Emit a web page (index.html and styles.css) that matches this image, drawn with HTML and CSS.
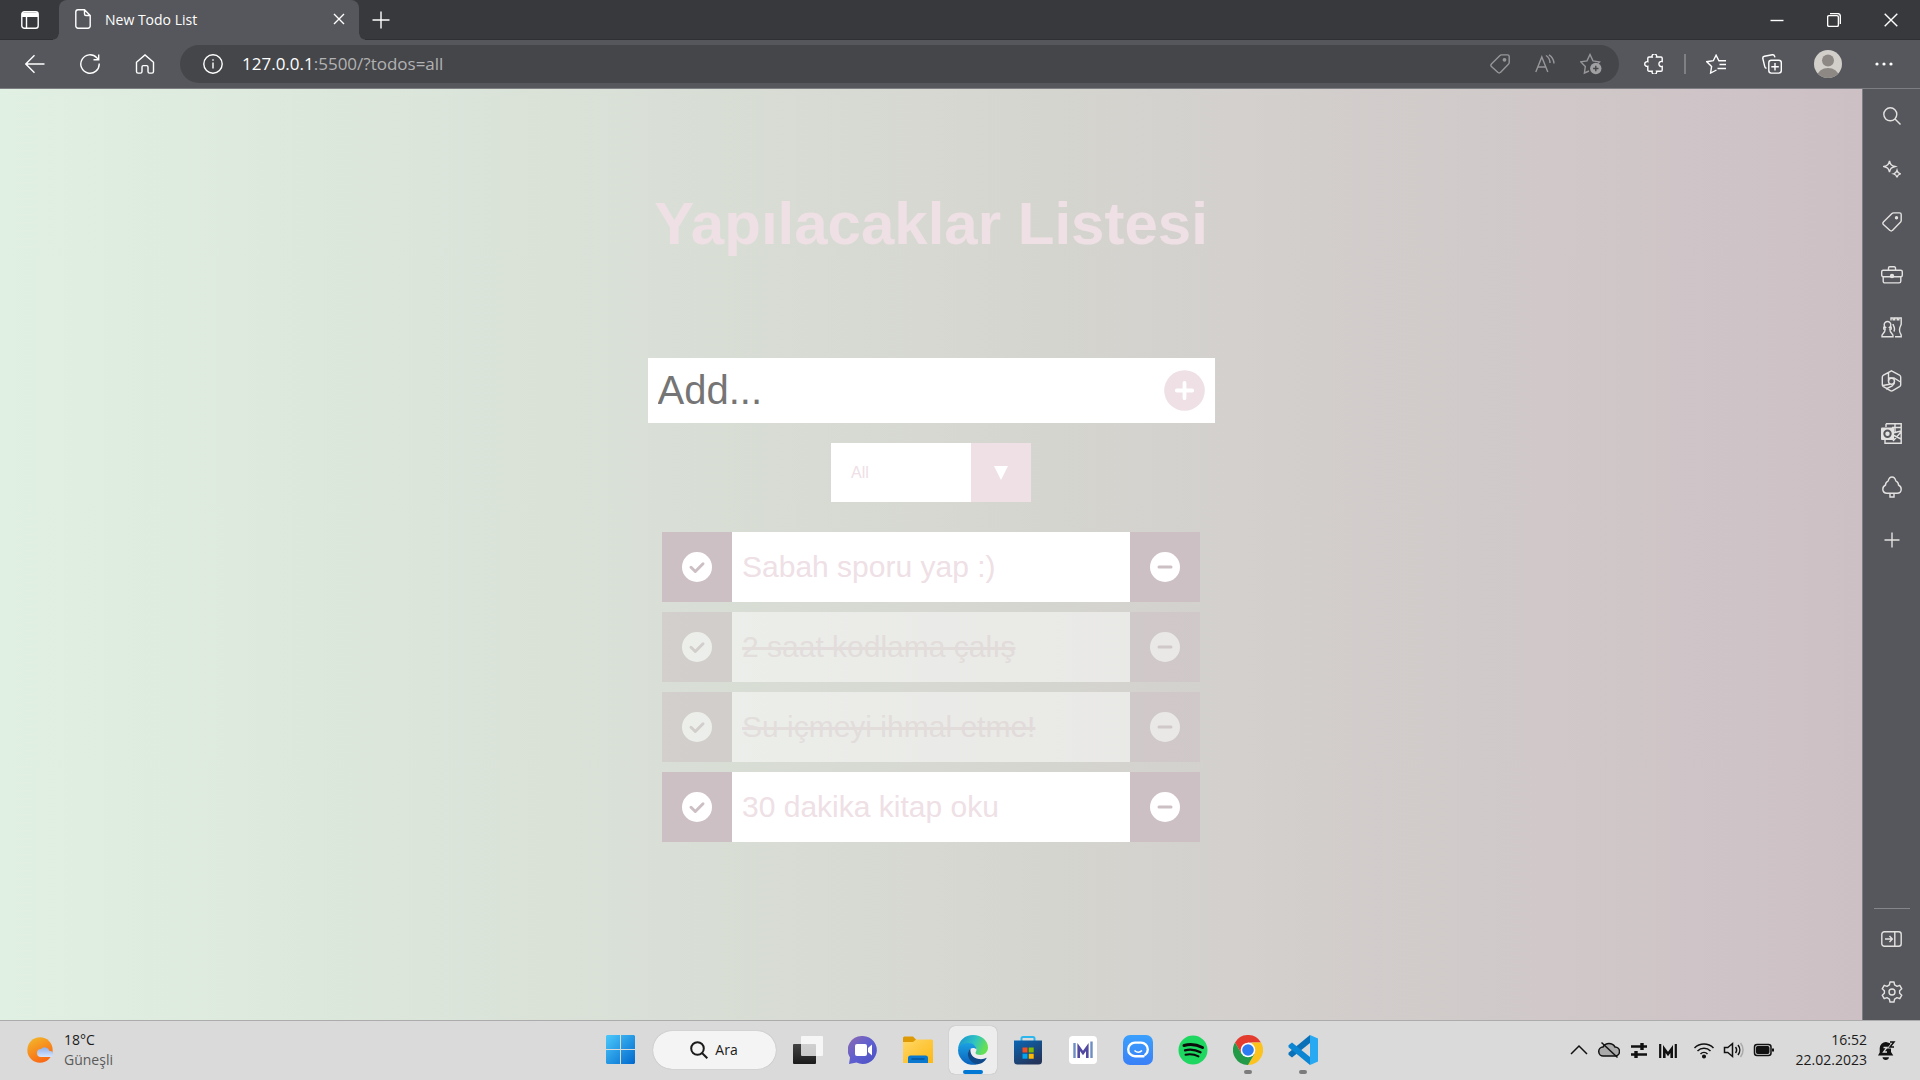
FILE: index.html
```html
<!DOCTYPE html>
<html lang="tr">
<head>
<meta charset="utf-8">
<meta name="viewport" content="width=device-width, initial-scale=1">
<title>New Todo List</title>
<link rel="stylesheet" href="styles.css">
</head>
<body>
<header class="browser">
  <div class="tabbar">
    <button class="tab-actions" aria-label="Tab actions"><svg width="18" height="18" viewBox="0 0 18 18"><rect x=".8" y=".8" width="16.4" height="16.4" rx="2.5" class="line"/><path d="M1 1.500h16v4.500H1z" fill="#fff"/><path d="M5.500 6v11" class="line"/></svg></button>
    <div class="tab">
      <svg width="16" height="20" viewBox="0 0 16 20" class="line"><path d="M3 .8h6.500L15.200 6.500V17a2.200 2.200 0 0 1-2.200 2.200H3A2.200 2.200 0 0 1 .8 17V3A2.200 2.200 0 0 1 3 .8zM9.500.8V5A1.500 1.500 0 0 0 11 6.500h4.200"/></svg>
      <span class="tab-title">New Todo List</span>
      <button class="tab-close" aria-label="Close tab"><svg width="12" height="12" viewBox="0 0 12 12" class="line"><path d="M1 1l10 10M11 1L1 11"/></svg></button>
    </div>
    <button class="new-tab" aria-label="New tab"><svg width="18" height="18" viewBox="0 0 18 18" class="line"><path d="M9 .5v17M.5 9h17"/></svg></button>
    <div class="window-buttons">
      <button aria-label="Minimize"><svg width="14" height="14" viewBox="0 0 14 14" class="line"><path d="M.5 7.500h13"/></svg></button>
      <button aria-label="Restore"><svg width="14" height="14" viewBox="0 0 14 14" class="line"><rect x=".6" y="2.600" width="10.800" height="10.800" rx="1.500"/><path d="M3 .6h7.500A2.900 2.900 0 0 1 13.400 3.500V11"/></svg></button>
      <button aria-label="Close"><svg width="14" height="14" viewBox="0 0 14 14" class="line"><path d="M.7.7l12.600 12.600M13.300.7L.7 13.300"/></svg></button>
    </div>
  </div>
  <div class="toolbar">
    <nav class="nav-buttons">
      <button aria-label="Back"><svg width="20" height="20" viewBox="0 0 20 20" class="line"><path d="M19.500 10H.8M9.500 1.200L.8 10l8.700 8.800"/></svg></button>
      <button aria-label="Refresh"><svg width="20" height="20" viewBox="0 0 20 20" class="line"><path d="M19.200 9.500A9.200 9.200 0 1 1 16.800 3.800L18.500 5.500M18.700.5v5.200h-5.200"/></svg></button>
      <button aria-label="Home"><svg width="20" height="20" viewBox="0 0 20 20" class="line"><path d="M1.500 8.200L10 .9l8.500 7.300V17.500a1.600 1.600 0 0 1-1.600 1.600h-2.300a1.600 1.600 0 0 1-1.600-1.600V13a1.400 1.400 0 0 0-1.400-1.400H8.400A1.400 1.400 0 0 0 7 13v4.500a1.600 1.600 0 0 1-1.600 1.600H3.100a1.600 1.600 0 0 1-1.600-1.600z"/></svg></button>
    </nav>
    <div class="address">
      <svg width="20" height="20" viewBox="0 0 20 20" class="line"><circle cx="10" cy="10" r="9.200"/><path d="M10 8.500v6M10 5.200v1.500"/></svg>
      <div class="url" role="textbox" aria-label="Address"><span class="host">127.0.0.1</span>:5500/?todos=all</div>
      <div class="address-actions">
        <button aria-label="Shopping"><svg width="20" height="20" viewBox="0 0 20 20" class="line"><path d="M11.500.9h6a1.700 1.700 0 0 1 1.700 1.700v6c0 .6-.2 1-.6 1.400l-8.200 8.400a1.600 1.600 0 0 1-2.400 0L1.400 12.500a1.600 1.600 0 0 1 0-2.400L10 1.500c.4-.4.900-.6 1.500-.6z"/><circle cx="14.500" cy="5.800" r="1.200" fill="currentColor"/></svg></button>
        <button aria-label="Read aloud"><svg width="20" height="20" viewBox="0 0 20 20" class="line"><path d="M.8 18L6.800 3l6 15M3 13h7.700M11 1.500a9 9 0 0 1 4 7.500M14 .8a11 11 0 0 1 5 8.700"/></svg></button>
        <button aria-label="Add to favorites"><svg width="22" height="22" viewBox="0 0 22 22"><path class="line" d="M9 18l-4.600 2 .9-6.400L.8 8.900l6.200-1L10 1.500l3 6.400 6.500 1-1.500 1.600"/><circle cx="15.800" cy="15.500" r="5.700" fill="#a0a0a2"/><path d="M15.800 12.800v5.400M13.100 15.500h5.400" stroke="#454649" stroke-width="1.400"/></svg></button>
      </div>
    </div>
    <div class="tools">
      <button aria-label="Extensions"><svg width="20" height="20" viewBox="0 0 20 20" class="line"><path d="M5 3h3.200a2.300 2.300 0 1 1 4.300 0H17a1.200 1.200 0 0 1 1.200 1.200V7.500a2.600 2.600 0 1 0 0 5V16a1.200 1.200 0 0 1-1.200 1.200h-4.500a2.300 2.300 0 1 1-4.300 0H5A1.200 1.200 0 0 1 3.800 16v-3.700a2.400 2.400 0 1 1 0-4.600V4.200A1.200 1.200 0 0 1 5 3z"/></svg></button>
      <span class="tool-rule"></span>
      <button aria-label="Favorites"><svg width="20" height="20" viewBox="0 0 20 20" class="line"><path d="M10.500 16l-5.900 3 1-6.600L.8 7.700l6.500-1 2.800-5.500 2.800 5.500H20M13.500 10.500H20M11.500 14.500H20"/></svg></button>
      <button aria-label="Collections"><svg width="20" height="20" viewBox="0 0 20 20" class="line"><rect x="6.800" y="6.300" width="12.500" height="12.800" rx="2.500"/><path d="M13 9v7.500M9.300 12.700h7.500M4.500 14.300A2.500 2.500 0 0 1 2.700 12.300L.8 4.500A2 2 0 0 1 2.400 2.200L10.300.8a2 2 0 0 1 2.300 1.400l.3 1.200"/></svg></button>
      <button aria-label="Profile"><svg width="28" height="28" viewBox="0 0 28 28"><clipPath id="face"><circle cx="14" cy="14" r="14"/></clipPath><g clip-path="url(#face)"><path fill="#d2cfca" d="M0 0h28v28H0z"/><circle cx="14" cy="10.500" r="6" fill="#8d8884"/><ellipse cx="14" cy="26" rx="10.500" ry="8" fill="#8d8884"/></g></svg></button>
      <button aria-label="Settings and more"><svg width="18" height="4" viewBox="0 0 18 4" fill="#fff"><circle cx="2" cy="2" r="1.600"/><circle cx="9" cy="2" r="1.600"/><circle cx="16" cy="2" r="1.600"/></svg></button>
    </div>
  </div>
</header>

<div class="workspace">
  <main class="page">
    <h1 class="page-title">Yapılacaklar Listesi</h1>
    <form class="add-form">
      <input class="add-input" type="text" placeholder="Add..." aria-label="Add">
      <button class="add-button" type="button" aria-label="Add todo"><svg width="41" height="41" viewBox="0 0 41 41"><circle cx="20.500" cy="20.500" r="20.300" fill="#eee0e5"/><path d="M20.500 12.800v15.400M12.800 20.500h15.400" stroke="#fff" stroke-width="3.800" stroke-linecap="round"/></svg></button>
    </form>
    <div class="filter">
      <select class="filter-select" aria-label="Filter"><option>All</option><option>Completed</option><option>Uncompleted</option></select>
      <span class="filter-arrow"><svg width="14" height="14" viewBox="0 0 14 14"><path d="M0 0h14L7 14z" fill="#fff"/></svg></span>
    </div>
    <ul class="todo-list">
      <li class="todo">
        <button aria-label="Complete"><svg width="30" height="30" viewBox="0 0 30 30"><circle cx="15" cy="15" r="15" fill="#fff"/><path d="M9 15.300l4.300 4.200 7.700-7.700" class="mark"/></svg></button>
        <span class="todo-text">Sabah sporu yap :)</span>
        <button aria-label="Remove"><svg width="30" height="30" viewBox="0 0 30 30"><circle cx="15" cy="15" r="15" fill="#fff"/><path d="M9 15h12" class="mark minus"/></svg></button>
      </li>
      <li class="todo done">
        <button aria-label="Complete"><svg width="30" height="30" viewBox="0 0 30 30"><circle cx="15" cy="15" r="15" fill="#fff"/><path d="M9 15.300l4.300 4.200 7.700-7.700" class="mark"/></svg></button>
        <span class="todo-text">2 saat kodlama çalış</span>
        <button aria-label="Remove"><svg width="30" height="30" viewBox="0 0 30 30"><circle cx="15" cy="15" r="15" fill="#fff"/><path d="M9 15h12" class="mark minus"/></svg></button>
      </li>
      <li class="todo done">
        <button aria-label="Complete"><svg width="30" height="30" viewBox="0 0 30 30"><circle cx="15" cy="15" r="15" fill="#fff"/><path d="M9 15.300l4.300 4.200 7.700-7.700" class="mark"/></svg></button>
        <span class="todo-text">Su içmeyi ihmal etme!</span>
        <button aria-label="Remove"><svg width="30" height="30" viewBox="0 0 30 30"><circle cx="15" cy="15" r="15" fill="#fff"/><path d="M9 15h12" class="mark minus"/></svg></button>
      </li>
      <li class="todo">
        <button aria-label="Complete"><svg width="30" height="30" viewBox="0 0 30 30"><circle cx="15" cy="15" r="15" fill="#fff"/><path d="M9 15.300l4.300 4.200 7.700-7.700" class="mark"/></svg></button>
        <span class="todo-text">30 dakika kitap oku</span>
        <button aria-label="Remove"><svg width="30" height="30" viewBox="0 0 30 30"><circle cx="15" cy="15" r="15" fill="#fff"/><path d="M9 15h12" class="mark minus"/></svg></button>
      </li>
    </ul>
  </main>
  <aside class="sidebar">
    <button aria-label="Search"><svg width="18" height="18" viewBox="0 0 18 18" class="line"><circle cx="7.300" cy="7.300" r="6.500"/><path d="M12 12l5.500 5.500"/></svg></button>
    <button aria-label="Discover"><svg width="18" height="18" viewBox="0 0 18 18" class="line"><path d="M6.500.8c.8 3.700 1.800 4.700 5.600 5.700-3.800 1-4.800 2-5.600 5.700C5.600 8.500 4.600 7.500.8 6.500 4.600 5.500 5.600 4.500 6.500.8zM14 10.500c.5 2 1.200 2.700 3.300 3.300-2.100.6-2.800 1.300-3.300 3.500-.6-2.200-1.200-2.900-3.300-3.500 2.100-.6 2.700-1.300 3.300-3.300z"/></svg></button>
    <button aria-label="Shopping"><svg class="line" width="20" height="20" viewBox="0 0 20 20"><path d="M11.500.9h6a1.700 1.700 0 0 1 1.700 1.700v6c0 .6-.2 1-.6 1.400l-8.200 8.400a1.600 1.600 0 0 1-2.400 0L1.400 12.500a1.600 1.600 0 0 1 0-2.400L10 1.500c.4-.4.900-.6 1.500-.6z"/><circle cx="14.500" cy="5.800" r="1" fill="currentColor"/></svg></button>
    <button aria-label="Tools"><svg width="22" height="18" viewBox="0 0 22 18" class="line"><rect x=".7" y="4.200" width="20.600" height="6.500" rx="1.500"/><path d="M2.200 10.700v4.500a1.700 1.700 0 0 0 1.700 1.700h14.200a1.700 1.700 0 0 0 1.700-1.700v-4.500M7.500 4V2A1.200 1.200 0 0 1 8.700.8h4.600A1.200 1.200 0 0 1 14.500 2v2"/><circle cx="11" cy="10" r="1.500" fill="currentColor"/></svg></button>
    <button aria-label="Games"><svg width="21" height="21" viewBox="0 0 21 21" class="line"><path d="M1 19.800v-1.300c0-1.500 3.200-2.500 3.200-6.500H2.800v-1.800h1.400a3.300 3.300 0 1 1 4.600 0h1.400V12H8.800c0 4 3.200 5 3.200 6.500v1.300zM14 19.800h6.200v-1.500c0-1.300-1.700-1.800-1.700-5.300 0-3.500 1.700-4.500 1.700-6V1h-2.400v1.800h-1.500V1h-2.600v1.800h-1.500V1H10v2.500M12 7c0 1.500 1.500 2.500 1.500 5 0 1.300-.3 2-.7 2.500"/></svg></button>
    <button aria-label="Office"><svg width="21" height="22" viewBox="0 0 21 22" class="line"><path d="M10.500.8l8 4.300c.8.500 1.200 1.200 1.200 2v7.600c0 .9-.4 1.500-1.200 2l-6.800 4c-.8.500-1.600.5-2.400 0l-6.800-4c-.8-.5-1.200-1.200-1.200-2V7.100c0-.8.400-1.500 1.200-2zM7.500 2.500v8.800M7.500 8h5.500l6.500 4M13.500 11.500c0 2-.8 3.500-2.300 4.500L5 19M1.500 15.500L9 14.200"/><circle cx="10.500" cy="11.300" r="3"/></svg></button>
    <button aria-label="Outlook"><svg width="21" height="21" viewBox="0 0 21 21"><path d="M5 .8h15.200v19.400H4V16M5 4V.8M11 4.500h9M14 .8v8M12 10l8-2M12 12l8 4M12 18l8-9" class="line"/><rect x="0" y="4.500" width="13" height="12.500" rx="1" fill="#e4e2e0"/><circle cx="6.500" cy="10.700" r="3.200" fill="none" stroke="#56575c" stroke-width="2"/></svg></button>
    <button aria-label="Drop"><svg width="20" height="22" viewBox="0 0 20 22" class="line"><path d="M10 1c2.300 0 3.300 2 3.800 3.800 2 1 2.700 2.700 2.700 4.200 1.800.9 2.700 2.500 2.700 4.200 0 2.300-1.800 4-4.200 4H5c-2.400 0-4.200-1.700-4.200-4 0-1.700.9-3.300 2.700-4.200 0-1.500.7-3.200 2.700-4.200C6.700 3 7.700 1 10 1zM8 17.500V21h4v-3.500"/></svg></button>
    <button aria-label="Customize"><svg width="16" height="16" viewBox="0 0 16 16" class="line"><path d="M8 .5v15M.5 8h15"/></svg></button>
    <hr class="side-rule">
    <button aria-label="Hide sidebar"><svg width="21" height="16" viewBox="0 0 21 16" class="line"><rect x=".8" y=".8" width="19.400" height="14.400" rx="2.500"/><path d="M13.800 1v14M4 8h7M8.500 5L11.300 8l-2.800 3"/></svg></button>
    <button aria-label="Settings"><svg width="22" height="22" viewBox="0 0 22 22" class="line"><path d="M9 1h4l.6 2.900 2.400 1.400 2.800-1 2 3.500L18.600 9.700v2.600l2.200 1.900-2 3.500-2.800-1-2.400 1.400L13 21H9l-.6-2.900L6 16.700l-2.800 1-2-3.500 2.200-1.900V9.700L1.200 7.800l2-3.500 2.800 1 2.400-1.400z" stroke-linejoin="round"/><circle cx="11" cy="11" r="3"/></svg></button>
  </aside>
</div>

<footer class="taskbar">
  <div class="weather">
    <svg width="28" height="26" viewBox="0 0 28 26"><defs><linearGradient id="sun" x1="0" y1="0" x2=".5" y2="1"><stop offset="0" stop-color="#f2bb2c"/><stop offset="1" stop-color="#fa6a14"/></linearGradient><linearGradient id="cloud" x1="0" y1="0" x2="0" y2="1"><stop offset="0" stop-color="#8fb0ea"/><stop offset="1" stop-color="#d6e4fb"/></linearGradient></defs><circle cx="13" cy="13" r="12.700" fill="url(#sun)"/><path d="M14 20a4 4 0 0 1 0-8 5 5 0 0 1 8.500 2 3.200 3.200 0 0 1 2 6z" fill="url(#cloud)"/></svg>
    <div class="weather-text"><span>18°C</span><span class="muted">Güneşli</span></div>
  </div>
  <nav class="apps">
    <button class="app" aria-label="Start"><svg width="30" height="30" viewBox="0 0 30 30"><defs><linearGradient id="win" x1="0" y1="0" x2="1" y2="1"><stop offset="0" stop-color="#4cc9fb"/><stop offset="1" stop-color="#0068cd"/></linearGradient></defs><path fill="url(#win)" d="M1 0h13v14H0V1zM15 0h13l1 1v13H15zM0 15h14v14H1l-1-1zM15 15h14v13l-1 1H15z"/></svg></button>
    <button class="search"><svg width="18" height="18" viewBox="0 0 18 18"><circle cx="7.500" cy="7.500" r="6.300"/><path d="M12 12l5.300 5.300"/></svg><span>Ara</span></button>
    <button class="app" aria-label="Task view"><svg width="30" height="30" viewBox="0 0 30 30"><defs><linearGradient id="tv" x1="0" y1="0" x2="0" y2="1"><stop offset="0" stop-color="#444"/><stop offset="1" stop-color="#1b1b1b"/></linearGradient></defs><rect y="9" width="23" height="20" rx="1" fill="url(#tv)"/><rect x="8" y="1" width="22" height="20" rx="1" fill="#fff" fill-opacity=".75"/></svg></button>
    <button class="app" aria-label="Chat"><svg width="30" height="30" viewBox="0 0 30 30"><defs><linearGradient id="chat" x1="0" y1="0" x2="1" y2="1"><stop offset="0" stop-color="#8f6aae"/><stop offset=".5" stop-color="#5f5fd0"/><stop offset="1" stop-color="#4b50c4"/></linearGradient></defs><path d="M15 1a14 14 0 1 1-6.500 26.500L1 29l1-6.500A14 14 0 0 1 15 1z" fill="url(#chat)"/><rect x="7" y="9" width="12" height="12" rx="2" fill="#fff"/><path d="M20 13l4-3.500v11L20 17z" fill="#fff"/></svg></button>
    <button class="app" aria-label="File Explorer"><svg width="30" height="28" viewBox="0 0 30 28"><defs><linearGradient id="fold" x1="0" y1="0" x2="1" y2="1"><stop offset="0" stop-color="#ffd767"/><stop offset="1" stop-color="#fdb813"/></linearGradient></defs><path d="M0 2a1.500 1.500 0 0 1 1.500-1.500H10l3 3V7H0z" fill="#dd9a04"/><path d="M0 6h10l3-2.500h16l1 1V27H0z" fill="url(#fold)"/><path d="M5 27v-5a2.500 2.500 0 0 1 2.500-2.500h15A2.500 2.500 0 0 1 25 22v5z" fill="#0a78cf"/><path d="M8.500 23h13" stroke="#06549b" stroke-width="1.500"/></svg></button>
    <button class="app active" aria-label="Edge"><svg width="30" height="30" viewBox="0 0 30 30"><defs><linearGradient id="e1" x1="0" y1="0" x2="1" y2=".3"><stop offset="0" stop-color="#168fd6"/><stop offset=".6" stop-color="#30c3c2"/><stop offset="1" stop-color="#65e055"/></linearGradient><linearGradient id="e2" x1="0" y1="0" x2="0" y2="1"><stop offset="0" stop-color="#1ba0e2"/><stop offset="1" stop-color="#0a62bc"/></linearGradient></defs><path d="M0 14C1 5 7 0 15 0c9 0 15 6 15 12.500 0 4.500-3.500 7.500-7.500 7.500-3 0-5-1-5-2.300 0-.8 1-1.200 1-3.200 0-2.500-3-5.500-7-5.500C6 9 1 12 0 14z" fill="url(#e1)"/><path d="M0 15c.5-4.500 5-7 10.500-7 5 0 8 3.500 8 6.500-1-1.500-2.500-1.500-3.500-1.500-3 0-4.500 3-4.500 5.500 0 5 5 9 9.500 10.500A15 15 0 0 1 0 15z" fill="url(#e2)"/><path d="M12.500 13.500C9 16.500 9 22 13 26s8 3.700 11 2c2.500-1.500 4-3.500 4.800-5.200-2.500 1-4.800 1.700-8 1.200-6-1-9-5-8.300-10.500z" fill="#114a8b"/></svg></button>
    <button class="app" aria-label="Microsoft Store"><svg width="30" height="30" viewBox="0 0 30 30"><defs><linearGradient id="store" x1="0" y1="0" x2=".6" y2="1"><stop offset="0" stop-color="#0a67b5"/><stop offset="1" stop-color="#24355c"/></linearGradient></defs><path d="M8.500 6V3.500a1.500 1.500 0 0 1 1.500-1.500h10a1.500 1.500 0 0 1 1.500 1.500V6" fill="none" stroke="#2cb6ee" stroke-width="2"/><path d="M1 5.500h28V26a3.500 3.500 0 0 1-3.500 3.500h-21A3.500 3.500 0 0 1 1 26z" fill="url(#store)"/><path d="M9.500 12.500h5v5h-5z" fill="#f25022"/><path d="M15.700 12.500h5v5h-5z" fill="#7fba00"/><path d="M9.500 18.700h5v5h-5z" fill="#00a4ef"/><path d="M15.700 18.700h5v5h-5z" fill="#ffb900"/></svg></button>
    <button class="app" aria-label="PC Manager"><svg width="30" height="30" viewBox="0 0 30 30"><rect x="1" y="1" width="28" height="28" rx="4" fill="#fff"/><path d="M6.500 8v15M23.500 6.500V23" stroke="#6f8fc0" stroke-width="2.400"/><path d="M10.700 23V12l4.300 6 4.300-6v11" fill="none" stroke="#514aa0" stroke-width="2.600"/></svg></button>
    <button class="app" aria-label="Messages"><svg width="30" height="30" viewBox="0 0 30 30"><defs><linearGradient id="msg" x1="0" y1="0" x2="0" y2="1"><stop offset="0" stop-color="#3ba0fd"/><stop offset="1" stop-color="#3a80f7"/></linearGradient></defs><rect width="30" height="30" rx="7" fill="url(#msg)"/><path d="M20.500 21.200H12a6.800 6.800 0 0 1 0-13.600h6a6.800 6.800 0 0 1 6.800 6.800c0 2.200-1 4-2.500 5.200" fill="none" stroke="#fff" stroke-width="2.400" stroke-linecap="round"/><path d="M11.500 15.500q4 3.500 7.500 0" fill="none" stroke="#fff" stroke-width="1.600"/></svg></button>
    <button class="app" aria-label="Spotify"><svg width="30" height="30" viewBox="0 0 30 30"><circle cx="15" cy="15" r="14.500" fill="#1ed760"/><g fill="none" stroke="#0b0b0b" stroke-linecap="round"><path d="M6 10.500q9.500-2.500 18.500 2" stroke-width="3"/><path d="M7 15.300q8-2 15.500 2" stroke-width="2.400"/><path d="M7.500 19.700q7-1.500 13 1.700" stroke-width="2"/></g></svg></button>
    <button class="app running" aria-label="Chrome"><svg width="30" height="30" viewBox="0 0 30 30"><path d="M2 7.500A15 15 0 0 1 28 7.500H15L8.500 18.700z" fill="#e33b2e"/><path d="M28 7.500A15 15 0 0 1 15 30l6.500-11.300L19 7.500z" fill="#fcc31e"/><path d="M2 7.500A15 15 0 0 0 15 30l6.500-11.300H8.500z" fill="#229a48"/><circle cx="15" cy="15" r="7.300" fill="#fff"/><circle cx="15" cy="15" r="5.800" fill="#2c7bf0"/></svg></button>
    <button class="app running" aria-label="Visual Studio Code"><svg width="30" height="30" viewBox="0 0 30 30"><path d="M22 0l8 3.500v23L22 30z" fill="#29a9f2"/><path d="M22 0v8L4 22.500l-3.500-2.700v-2z" fill="#0a70b8"/><path d="M22 30v-8L4 7.500.5 10.200v2z" fill="#0c86d2"/></svg></button>
  </nav>
  <div class="tray">
    <button aria-label="Hidden icons"><svg width="20" height="20" viewBox="0 0 20 20" class="ink"><path d="M2 14l8-8 8 8"/></svg></button>
    <button aria-label="OneDrive"><svg width="22" height="20" viewBox="0 0 22 20" class="ink"><path d="M5.500 16a4.500 4.500 0 0 1-.5-9A7 7 0 0 1 17 7a4.500 4.500 0 0 1 0 9z" fill="#aaa"/><path d="M3.500 2.500l16 15"/></svg></button>
    <button aria-label="Sliders"><svg width="20" height="20" viewBox="0 0 20 20" class="ink"><path d="M2 6.500h16M2 14.500h16" stroke-width="2.600"/><path d="M13 3v7M7 11v7" stroke-width="3.400"/></svg></button>
    <button aria-label="PC Manager"><svg width="20" height="20" viewBox="0 0 20 20" class="ink"><path d="M2.200 4v14M17.800 4v14" stroke-width="2.200"/><path d="M6.300 18V9l3.700 5 3.700-5v9" stroke-width="2.600"/></svg></button>
    <span class="tray-status">
      <svg width="22" height="20" viewBox="0 0 22 20" class="ink" aria-label="Wi-Fi"><path d="M1.500 8a13.500 13.500 0 0 1 19 0M4.500 11a9.200 9.200 0 0 1 13 0M7.500 14a5 5 0 0 1 7 0"/><circle cx="11" cy="16.500" r="1.300" fill="#111"/></svg>
      <svg width="22" height="20" viewBox="0 0 22 20" class="ink" aria-label="Volume"><path d="M1.500 7.500h3.300L9.500 3.500v13L4.800 12.500H1.500zM12.500 7a5 5 0 0 1 0 6M15 5a8 8 0 0 1 0 10"/><path d="M17.500 3a11 11 0 0 1 0 14" stroke="#aaa"/></svg>
      <svg width="22" height="20" viewBox="0 0 22 20" class="ink" aria-label="Battery"><rect x="1.500" y="4.500" width="16.500" height="11" rx="2.500"/><rect x="3.700" y="6.700" width="12" height="6.600" rx="1" fill="#111"/><path d="M20 8.500v3" stroke-width="2"/></svg>
    </span>
    <div class="clock"><span>16:52</span><span>22.02.2023</span></div>
    <button aria-label="Notifications"><svg width="20" height="20" viewBox="0 0 20 20"><path d="M2 15.500l1.700-3V8A6.200 6.200 0 0 1 10 2l5 1.500V12l2.300 3.500zM6.500 17.200h6.500a3.300 3.300 0 0 1-6.500 0z" fill="#111"/><path d="M14 2h4l-4 5h4" fill="none" stroke="#dadada" stroke-width="3"/><path d="M7.500 7.500H11L7.500 12H11" fill="none" stroke="#dadada" stroke-width="1.300"/><path d="M14 2h4l-4 5h4" fill="none" stroke="#111" stroke-width="1.500"/></svg></button>
  </div>
</footer>
</body>
</html>
```
FILE: styles.css
```css
* {
  box-sizing: border-box;
}

body {
  margin: 0;
  min-height: 100vh;
  display: grid;
  grid-template-rows: auto 1fr auto;
  font-family: "Open Sans", "Noto Sans", sans-serif;
  font-size: 14px;
  color: #fff;
}

button {
  display: flex;
  align-items: center;
  justify-content: center;
  padding: 0;
  border: 0;
  background: none;
  color: inherit;
  font: inherit;
}

svg {
  display: block;
  flex: none;
}

.line {
  fill: none;
  stroke: currentColor;
  stroke-width: 1.4;
}

.ink {
  fill: none;
  stroke: #111;
  stroke-width: 1.5;
}

/* Browser frame */
.browser {
  background: #56575c;
  border-bottom: 1px solid #7d7e82;
}

.tabbar {
  display: flex;
  height: 40px;
  background: #38393c;
  border-bottom: 1px solid #2f3033;
}

.tab-actions {
  width: 59px;
}

.tab {
  position: relative;
  display: flex;
  align-items: center;
  width: 300px;
  height: 40px;
  padding: 0 8px 2px 16px;
  background: #56575c;
  border-radius: 8px 8px 0 0;
}

.tab::before,
.tab::after {
  content: "";
  position: absolute;
  bottom: 0;
  width: 6px;
  height: 6px;
}

.tab::before {
  right: 100%;
  background: radial-gradient(circle at 0 0, #38393c 5px, #56575c 6px);
}

.tab::after {
  left: 100%;
  background: radial-gradient(circle at 100% 0, #38393c 5px, #56575c 6px);
}

.tab-title {
  flex: 1;
  margin-left: 14px;
}

.tab-close {
  width: 24px;
  height: 24px;
}

.new-tab {
  width: 44px;
}

.window-buttons {
  display: flex;
  margin-left: auto;
  padding-right: 1px;
}

.window-buttons button {
  width: 57px;
}

.toolbar {
  display: flex;
  align-items: center;
  height: 48px;
  padding-right: 8px;
}

.nav-buttons {
  display: flex;
  padding: 0 8px 0 7px;
}

.nav-buttons button {
  width: 55px;
  height: 40px;
}

.tools button {
  width: 56px;
  height: 40px;
}

.address {
  flex: 1;
  display: flex;
  align-items: center;
  height: 38px;
  padding: 0 17px 0 23px;
  border-radius: 19px;
  background: #454649;
}

.url {
  flex: 1;
  margin-left: 19px;
  padding-bottom: 2px;
  font-size: 17px;
  color: #b2b2b4;
}

.host {
  color: #fff;
}

.address-actions {
  display: flex;
  gap: 25px;
  color: #97979a;
}

.tools {
  display: flex;
  align-items: center;
  padding-left: 7px;
}

.tool-rule {
  width: 2px;
  height: 20px;
  background: #7f8084;
  margin: 0 2px;
}

.workspace {
  display: grid;
  grid-template-columns: 1fr 58px;
}

.sidebar {
  display: flex;
  flex-direction: column;
  padding-bottom: 2px;
  background: #56575c;
  border-left: 1px solid #7d7e82;
  color: #e4e2e0;
}

.sidebar button {
  height: 53px;
}

.side-rule {
  width: 36px;
  margin: auto auto 3px;
  border: 0;
  border-top: 1px solid #85868a;
}

/* Todo page */
.page {
  display: flex;
  flex-direction: column;
  align-items: center;
  padding: 100px 20px 40px;
  background: linear-gradient(to right, #e0f0e2, #d6d8d1 50%, #cdc0c5);
  font-family: Arial, "Liberation Sans", sans-serif;
  color: #eee0e5;
}

.page-title {
  margin: 0 0 99px;
  font-size: 60px;
  line-height: 70px;
}

.add-form {
  display: flex;
  width: 567px;
  max-width: 100%;
  height: 65px;
  background: #fff;
}

.add-input {
  flex: 1;
  min-width: 0;
  padding: 0 10px;
  border: 0;
  background: none;
  font: 40px Arial, "Liberation Sans", sans-serif;
}

.add-input::placeholder {
  color: #757575;
}

.add-button {
  padding: 0 10px;
}

.filter {
  display: grid;
  grid-template-columns: 1fr 60px;
  width: 200px;
  height: 59px;
  margin: 20px 0 30px;
}

.filter-select {
  grid-area: 1 / 1 / 2 / 3;
  appearance: none;
  padding: 0 20px;
  border: 0;
  border-radius: 0;
  background: #fff;
  font: 16px Arial, "Liberation Sans", sans-serif;
  color: #eee0e5;
}

.filter-arrow {
  grid-area: 1 / 2;
  display: flex;
  align-items: center;
  justify-content: center;
  background: #eee0e5;
  pointer-events: none;
}

.todo-list {
  display: grid;
  gap: 10px;
  width: 538px;
  max-width: 100%;
  margin: 0;
  padding: 0;
  list-style: none;
}

.todo {
  display: grid;
  grid-template-columns: 70px 1fr 70px;
  height: 70px;
  background: #fff;
}

.todo button {
  background: #cdc0c5;
}

.todo-text {
  padding: 0 10px;
  font-size: 30px;
  line-height: 70px;
}

.mark {
  fill: none;
  stroke: #cdc0c5;
  stroke-width: 3;
  stroke-linecap: round;
  stroke-linejoin: round;
}

.done {
  opacity: 0.5;
}

.done .todo-text {
  text-decoration: line-through 3px;
}

/* Taskbar */
.taskbar {
  display: grid;
  grid-template-columns: 1fr auto 1fr;
  align-items: center;
  height: 60px;
  padding-bottom: 1px;
  background: #dadada;
  border-top: 1px solid #acacac;
  color: #1b1b1b;
  line-height: 20px;
}

.weather {
  display: flex;
  align-items: center;
  gap: 9px;
  padding-left: 27px;
}

.weather-text,
.clock {
  display: grid;
}

.muted {
  color: #5a5a5a;
}

.apps {
  display: flex;
  align-items: center;
  gap: 7px;
  padding-left: 3px;
}

.app {
  position: relative;
  width: 48px;
  height: 48px;
  border-radius: 6px;
}

.active {
  background: #ededed;
  box-shadow: 0 0 1px #999;
}

.active::after,
.running::after {
  content: "";
  position: absolute;
  bottom: 0;
  width: 8px;
  height: 4px;
  border-radius: 2px;
  background: #7c7c7c;
}

.active::after {
  width: 20px;
  background: #0078d4;
}

.search {
  gap: 7px;
  width: 123px;
  height: 38px;
  margin: 0 1px;
  border-radius: 19px;
  background: #f4f4f4;
  box-shadow: 0 0 1px #999;
}

.search svg {
  fill: none;
  stroke: #1b1b1b;
  stroke-width: 2;
}

.tray {
  display: flex;
  align-items: center;
  justify-content: flex-end;
  gap: 9px;
  padding-right: 24px;
}

.tray-status {
  display: flex;
  gap: 8px;
  padding: 0 12px 0 6px;
}

.clock {
  text-align: right;
}
```
